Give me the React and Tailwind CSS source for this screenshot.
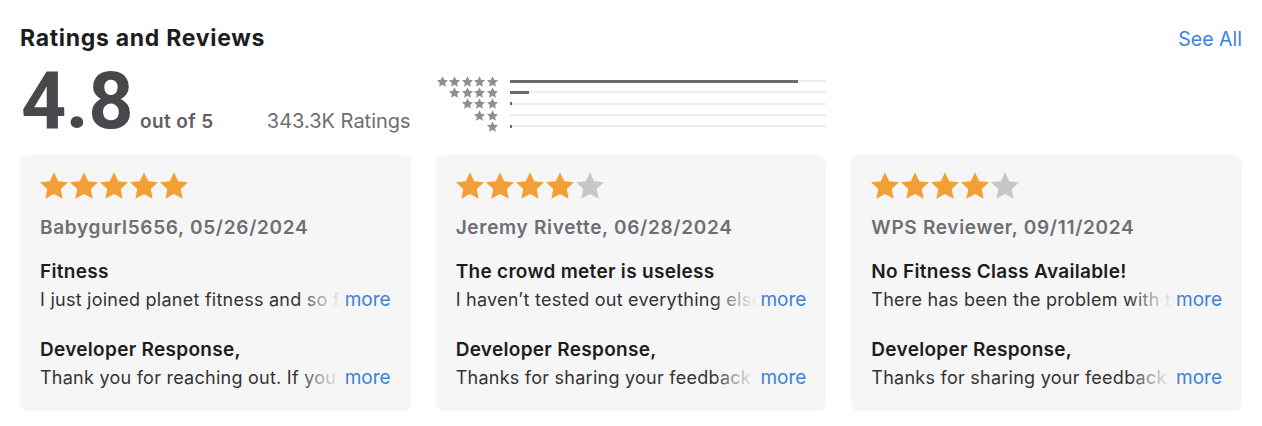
import React from "react";

const StarPath = "M12 1.6l3.09 6.63 7.26.86-5.36 4.98 1.42 7.17L12 17.67l-6.41 3.57 1.42-7.17L1.65 9.09l7.26-.86z";

function Star({ className, color }) {
  return (
    <svg viewBox="1.65 1.6 20.7 19.64" className={className}>
      <path d={StarPath} fill={color} />
    </svg>
  );
}

function Stars({ n }) {
  return (
    <div className="flex gap-[2px] h-[28px]">
      {[0, 1, 2, 3, 4].map((i) => (
        <Star key={i} className="w-[28px] h-[27px]" color={i < n ? "#f2a035" : "#c7c7c9"} />
      ))}
    </div>
  );
}

function Line({ text }) {
  return (
    <div className="relative h-[28px] overflow-hidden whitespace-nowrap text-[18px] leading-[28px] text-[#333336] tracking-[0.25px]">
      {text}
      <div className="absolute right-0 top-0 h-full flex">
        <div className="w-[44px] h-full bg-gradient-to-r from-[#f6f6f6]/0 via-[#f6f6f6]/60 to-[#f6f6f6]"></div>
        <span className="bg-[#f6f6f6] text-[#3b82d9] text-[19px] pl-[2px] tracking-normal">more</span>
      </div>
    </div>
  );
}

const reviews = [
  {
    stars: 5,
    name: "Babygurl5656, 05/26/2024",
    title: "Fitness",
    body: "I just joined planet fitness and so far I love it, the staff is friendly",
    resp: "Thank you for reaching out. If you have any questions",
  },
  {
    stars: 4,
    name: "Jeremy Rivette, 06/28/2024",
    title: "The crowd meter is useless",
    body: "I haven\u2019t tested out everything else in the app yet",
    resp: "Thanks for sharing your feedback with us",
  },
  {
    stars: 4,
    name: "WPS Reviewer, 09/11/2024",
    title: "No Fitness Class Available!",
    body: "There has been the problem with the app for a while",
    resp: "Thanks for sharing your feedback with us",
  },
];

const bars = [91, 6, 0.7, 0, 0.7];

export default function App() {
  return (
    <div className="w-[1262px] h-[426px] bg-white px-5 pt-[24px] font-['Inter','Liberation_Sans',sans-serif] antialiased">
      <div className="flex justify-between items-baseline h-[28px]">
        <h2 className="text-[23px] leading-[28px] font-bold text-[#1d1d1f] tracking-[0.7px]">Ratings and Reviews</h2>
        <span className="text-[19.5px] text-[#3b82d9]">See All</span>
      </div>
      <div className="grid grid-cols-3 gap-[25px] mt-[9px] h-[80px]">
        <div className="flex items-baseline justify-between">
          <div className="flex items-baseline">
            <span className="font-['Roboto',sans-serif] text-[79px] leading-[80px] font-bold text-[#48484c] ml-[1px] tracking-[-0.5px]">4.8</span>
            <span className="text-[19px] font-semibold text-[#5e5e63] ml-[7px] tracking-[0.4px]">out of 5</span>
          </div>
          <span className="text-[20px] text-[#6e6e73]">343.3K Ratings</span>
        </div>
        <div className="flex pt-[14.5px]">
          <div className="w-[62px] flex flex-col items-end">
            {[5, 4, 3, 2, 1].map((n) => (
              <div key={n} className="flex h-[11.3px] items-center gap-[1.5px]">
                {Array.from({ length: n }).map((_, i) => (
                  <Star key={i} className="w-[11px] h-[11px]" color="#8e8e93" />
                ))}
              </div>
            ))}
          </div>
          <div className="flex-1 ml-[12px] flex flex-col">
            {bars.map((w, i) => (
              <div key={i} className="h-[11.3px] flex items-center">
                <div className="relative w-full h-[2px] bg-[#ededf0]">
                  <div className="absolute left-0 top-[-0.5px] h-[3px] bg-[#6a6a6e]" style={{ width: `${w}%` }}></div>
                </div>
              </div>
            ))}
          </div>
        </div>
      </div>
      <div className="grid grid-cols-3 gap-[25px] mt-[14px]">
        {reviews.map((r, i) => (
          <div key={i} className="bg-[#f6f6f6] rounded-[8px] h-[256px] px-5 pt-[17px]">
            <Stars n={r.stars} />
            <div className="mt-[16px] text-[19px] leading-[24px] font-semibold text-[#6e6e73] tracking-[0.7px]">{r.name}</div>
            <div className="mt-[18px] text-[19px] leading-[28px] font-semibold text-[#1d1d1f] tracking-[0.3px]">{r.title}</div>
            <Line text={r.body} />
            <div className="mt-[22px] text-[19px] leading-[28px] font-semibold text-[#1d1d1f] tracking-[0.3px]">Developer Response,</div>
            <Line text={r.resp} />
          </div>
        ))}
      </div>
    </div>
  );
}
